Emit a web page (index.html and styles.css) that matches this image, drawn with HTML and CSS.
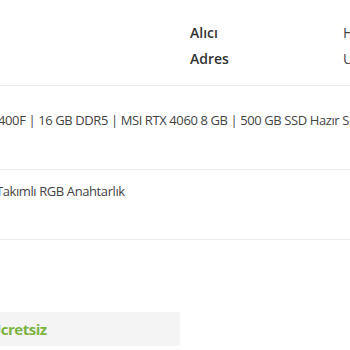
FILE: index.html
```html
<!DOCTYPE html>
<html lang="tr">
<head>
<meta charset="utf-8">
<link rel="stylesheet" href="styles.css">
</head>
<body>
<div class="page">
  <div class="recipient">
    <div class="label">Alıcı</div><div class="value">Hasan Yılmaz</div>
    <div class="label">Adres</div><div class="value">Uğur Mumcu Cad. No:12</div>
  </div>
  <div class="item item-first">
    <div class="name">AMD Ryzen 5 7400F | 16 GB DDR5 | MSI RTX 4060 8 GB | 500 GB SSD Hazır Sistem</div>
  </div>
  <div class="item item-second">
    <div class="name name-second">Gaming Klavye Mouse Takımlı RGB Anahtarlık</div>
  </div>
  <div class="shipping">
    <span class="free">Ücretsiz</span>
  </div>
</div>
</body>
</html>
```
FILE: styles.css
```css
html, body {
  margin: 0;
  padding: 0;
  background: #ffffff;
}
body {
  font-family: "Open Sans", "Noto Sans", sans-serif;
  color: #444444;
  width: 350px;
  height: 350px;
  overflow: hidden;
}
.page {
  width: 350px;
  overflow: hidden;
}
.recipient {
  display: grid;
  grid-template-columns: 153px auto;
  row-gap: 6px;
  padding: 23px 0 16px 190px;
  border-bottom: 1px solid #ebebeb;
  font-size: 14px;
  line-height: 20px;
  white-space: nowrap;
}
.label {
  font-weight: 600;
  color: #333333;
}
.value {
  color: #444444;
}
.item {
  border-bottom: 1px solid #ebebeb;
  font-size: 13px;
  line-height: 20px;
  letter-spacing: -0.4px;
  white-space: nowrap;
}
.item-first {
  padding: 24px 0 39px 0;
}
.item-second {
  padding: 11px 0 38px 0;
}
.name {
  margin-left: -87px;
}
.name-second {
  margin-left: -133px;
}
.shipping {
  margin-top: 72px;
  width: 180px;
  height: 34px;
  background: #f4f4f4;
  display: flex;
  align-items: center;
  white-space: nowrap;
  overflow: hidden;
}
.free {
  margin-left: -10px;
  font-size: 15px;
  font-weight: 700;
  letter-spacing: -0.5px;
  color: #7cb342;
}
```
